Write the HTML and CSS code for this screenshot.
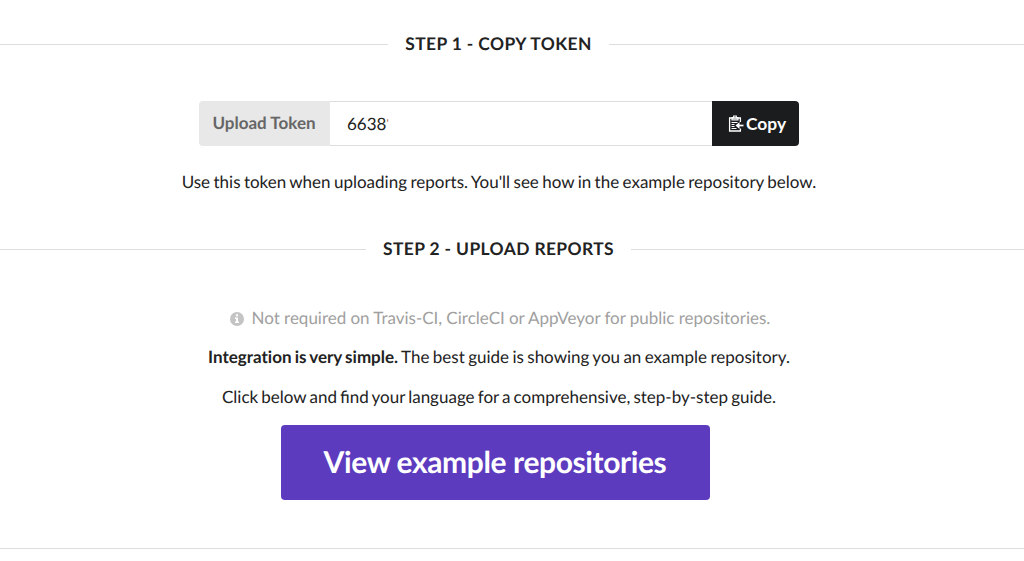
FILE: index.html
```html
<!DOCTYPE html>
<html lang="en">
<head>
    <meta charset="UTF-8">
    <title>Upload Token</title>
    <link rel="stylesheet" href="styles.css">
</head>
<body>
    <main>
        <section class="step step-token">
            <h2 class="divider">Step 1 - Copy Token</h2>
            <div class="token-input">
                <span class="token-label">Upload Token</span>
                <div class="token-value">6638<span class="token-mark">'</span></div>
                <button class="copy-button" type="button">
                    <svg class="copy-icon" viewBox="0 0 16 17" fill="none" stroke="currentColor">
                        <path stroke-width="1.3" d="M12.400 7V3H1.600v13h10.800v-2.500"/>
                        <path stroke-width="1.200" d="M4 4.800V2.600h1.700V1h2.600v1.600H10v2.200z"/>
                        <path stroke-width="1" d="M3.500 7.500h6M3.500 9.500h3M3.500 11.500h3M3.500 13.500h5"/>
                        <path stroke-width="1.700" d="M15.500 10.500H9"/>
                        <path fill="currentColor" stroke="none" d="M11.500 7v7L7.500 10.500z"/>
                    </svg>
                    Copy
                </button>
            </div>
            <p>Use this token when uploading reports. You'll see how in the example repository below.</p>
        </section>

        <section class="step step-upload">
            <h2 class="divider">Step 2 - Upload Reports</h2>
            <p class="note">
                <svg class="info-icon" viewBox="0 0 14 14">
                    <circle cx="7" cy="7" r="7" fill="currentColor"/>
                    <path d="M6 2.300h2v2H6zM5 5.500h3v4h1v1.500H5V9.500h1V7H5z" fill="#fff"/>
                </svg>
                Not required on Travis-CI, CircleCI or AppVeyor for public repositories.
            </p>
            <p class="intro"><strong>Integration is very simple.</strong> The best guide is showing you an example repository.</p>
            <p class="guide">Click below and find your language for a comprehensive, step-by-step guide.</p>
            <a class="view-button" href="#">View example repositories</a>
        </section>
    </main>
</body>
</html>
```

FILE: styles.css
```css
* {
    margin: 0;
    padding: 0;
    box-sizing: border-box;
}

body {
    font-family: Lato, sans-serif;
    font-size: 17px;
    line-height: 24px;
    color: #222;
    background: #fff;
    text-rendering: geometricPrecision;
}

main {
    height: 549px;
    padding-top: 32px;
    border-bottom: 1px solid #ddd;
}

.step {
    display: flex;
    flex-direction: column;
    align-items: center;
}

.step p {
    white-space: nowrap;
    word-spacing: -0.95px;
}

.divider {
    display: flex;
    align-items: center;
    width: 100%;
    gap: 17px;
    font-size: 17.4px;
    letter-spacing: 0.4px;
    text-transform: uppercase;
    white-space: nowrap;
}

.divider::before,
.divider::after {
    content: "";
    flex: 1;
    height: 1px;
    background: #ddd;
}

/* Headings sit slightly left of the middle */
.divider::before {
    margin-left: -27px;
}

/* Token field */
.token-input {
    display: flex;
    width: 600px;
    height: 45px;
    margin: 45px 26px 24px 0;
}

.token-label {
    width: 131px;
    padding-right: 1px;
    line-height: 44px;
    text-align: center;
    font-weight: bold;
    color: #666;
    background: #e8e8e8;
    border-radius: 4px 0 0 4px;
}

.token-value {
    flex: 1;
    padding: 0 17px;
    border: 1px solid #ddd;
    border-width: 1px 0;
    line-height: 44px;
}

.token-mark {
    font-size: 11px;
    vertical-align: 3px;
    line-height: 1;
    color: #a05040;
}

.copy-button {
    display: flex;
    align-items: center;
    justify-content: center;
    gap: 2px;
    width: 87px;
    padding-left: 3px;
    border: 0;
    border-radius: 0 4px 4px 0;
    font: bold 17.4px Lato, sans-serif;
    color: #fff;
    background: #1b1c1d;
}

.copy-icon {
    width: 16px;
    height: 17px;
}

.step-token p {
    margin-right: 26px;
}

.step-upload {
    margin-top: 43px;
}

.step .note {
    display: flex;
    align-items: center;
    gap: 8px;
    margin: 45px 24px 15px 0;
    word-spacing: -0.2px;
    color: #a0a0a0;
}

.info-icon {
    width: 14px;
    height: 14px;
    margin-top: 2px;
    color: #c4c4c4;
}

.intro,
.guide {
    margin: 0 26px 16px 0;
}

.intro strong {
    font-variant-ligatures: none;
}

.step .guide {
    word-spacing: -1.2px;
}

.view-button {
    width: 429px;
    height: 75px;
    margin-right: 34px;
    border-radius: 4px;
    font-size: 30px;
    font-weight: bold;
    letter-spacing: -0.4px;
    line-height: 75px;
    text-align: center;
    text-decoration: none;
    color: #fff;
    background: #5c3bbf;
}
```
